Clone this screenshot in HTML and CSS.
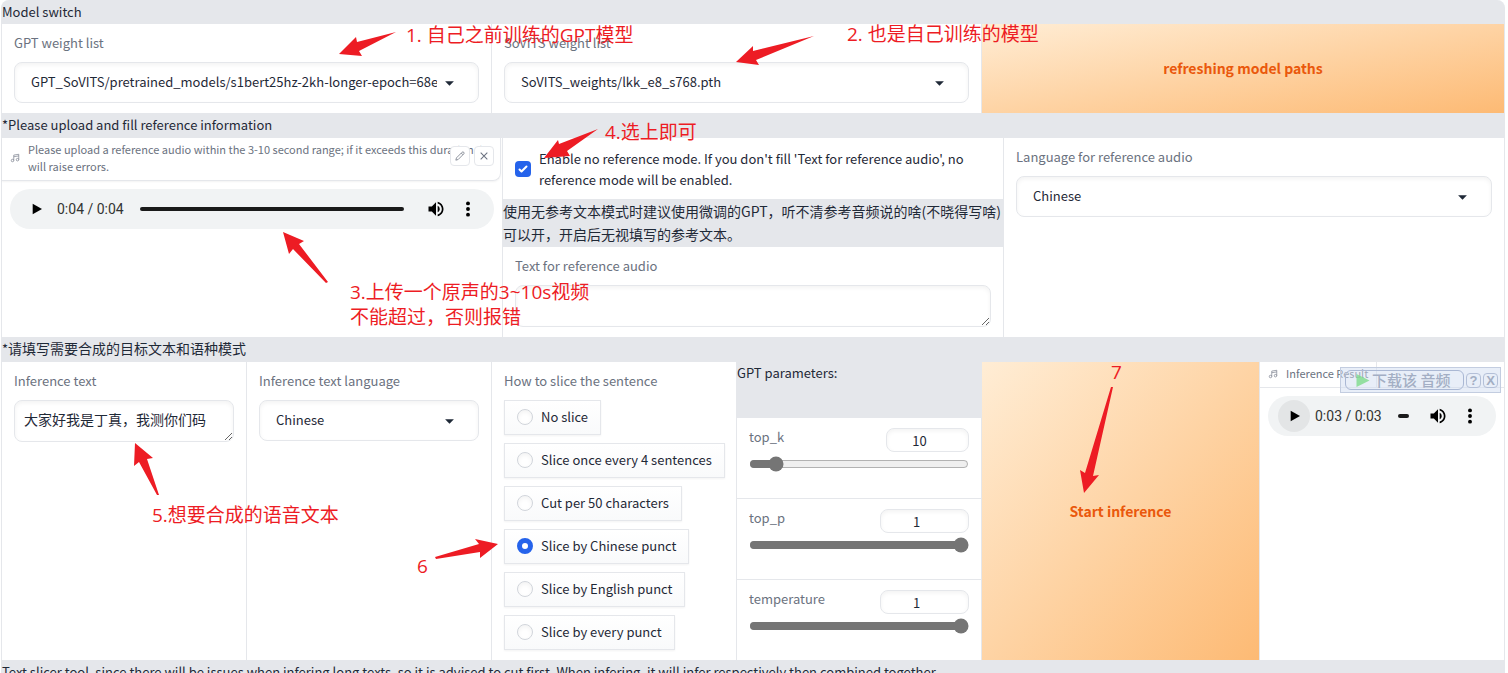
FILE: index.html
```html
<!DOCTYPE html>
<html lang="en">
<head>
<meta charset="utf-8">
<meta name="viewport" content="width=device-width, initial-scale=1">
<title>GPT-SoVITS Inference</title>
<link rel="stylesheet" href="styles.css">
</head>
<body>
<svg class="defs" aria-hidden="true">
  <symbol id="i-caret" viewBox="0 0 10 6"><path d="M1 1h8L5 5z" fill="#1f2937"/></symbol>
  <symbol id="i-music" viewBox="0 0 24 24"><g fill="none" stroke="currentColor" stroke-width="1.5"><path d="M9 18V5l12-2v13M9 9l12-2"/><circle cx="6" cy="18" r="3"/><circle cx="18" cy="16" r="3"/></g></symbol>
  <symbol id="i-pencil" viewBox="0 0 24 24"><path d="M17 3a2.8 2.8 0 1 1 4 4L7.500 20.500 2 22l1.500-5.500zM15 5l4 4" fill="none" stroke="currentColor" stroke-width="1.800" stroke-linejoin="round"/></symbol>
  <symbol id="i-close" viewBox="0 0 24 24"><path d="M4 4l16 16M20 4L4 20" fill="none" stroke="currentColor" stroke-width="2.500"/></symbol>
  <symbol id="i-play" viewBox="0 0 24 24"><path d="M7 4l14 8-14 8z"/></symbol>
  <symbol id="i-volume" viewBox="0 0 24 24"><path d="M3 9v6h4l5 5V4L7 9H3zm13.500 3A4.500 4.500 0 0 0 14 7.970v8.050c1.480-.730 2.500-2.250 2.500-4.020zM14 3.230v2.060c2.890.860 5 3.540 5 6.710s-2.110 5.850-5 6.710v2.060c4.010-.910 7-4.490 7-8.770s-2.990-7.860-7-8.770z"/></symbol>
  <symbol id="i-more" viewBox="0 0 24 24"><circle cx="12" cy="4.500" r="2.600"/><circle cx="12" cy="12" r="2.600"/><circle cx="12" cy="19.500" r="2.600"/></symbol>
</svg>

<main class="app">
  <h2 class="band band-first">Model switch</h2>

  <section class="row row-models">
    <div class="cell field">
      <label class="label" for="gpt">GPT weight list</label>
      <div class="select"><select id="gpt"><option>GPT_SoVITS/pretrained_models/s1bert25hz-2kh-longer-epoch=68e-step=50232.ckpt</option></select><svg><use href="#i-caret"/></svg></div>
    </div>
    <div class="cell field">
      <label class="label" for="sovits">SoVITS weight list</label>
      <div class="select"><select id="sovits"><option>SoVITS_weights/lkk_e8_s768.pth</option></select><svg><use href="#i-caret"/></svg></div>
    </div>
    <button class="primary" type="button">refreshing model paths</button>
  </section>

  <h2 class="band">*Please upload and fill reference information</h2>

  <section class="row row-reference">
    <div class="cell">
      <div class="audio-title audio-title-wide">
        <svg class="music"><use href="#i-music"/></svg>
        <span>Please upload a reference audio within the 3-10 second range; if it exceeds this duration, it will raise errors.</span>
        <div class="tools">
          <button type="button" aria-label="Edit"><svg><use href="#i-pencil"/></svg></button>
          <button type="button" aria-label="Clear"><svg><use href="#i-close"/></svg></button>
        </div>
      </div>
      <div class="player">
        <button type="button" class="play" aria-label="Play"><svg><use href="#i-play"/></svg></button>
        <span class="time">0:04 / 0:04</span>
        <span class="track"></span>
        <button type="button" aria-label="Mute"><svg class="vol"><use href="#i-volume"/></svg></button>
        <button type="button" aria-label="More options"><svg class="more"><use href="#i-more"/></svg></button>
      </div>
    </div>
    <div class="stack">
      <label class="cell check"><input type="checkbox" checked><span>Enable no reference mode. If you don't fill 'Text for reference audio', no reference mode will be enabled.</span></label>
      <p class="note">使用无参考文本模式时建议使用微调的GPT，听不清参考音频说的啥(不晓得写啥)可以开，开启后无视填写的参考文本。</p>
      <div class="cell field grow">
        <label class="label" for="reftext">Text for reference audio</label>
        <textarea id="reftext" rows="1"></textarea>
      </div>
    </div>
    <div class="cell field">
      <label class="label" for="reflang">Language for reference audio</label>
      <div class="select"><select id="reflang"><option>Chinese</option></select><svg><use href="#i-caret"/></svg></div>
    </div>
  </section>

  <h2 class="band">*<span class="zh">请填写需要合成的目标文本和语种模式</span></h2>

  <section class="row row-inference">
    <div class="cell field">
      <label class="label" for="text">Inference text</label>
      <textarea id="text" rows="1">大家好我是丁真，我测你们码</textarea>
    </div>
    <div class="cell field">
      <label class="label" for="lang">Inference text language</label>
      <div class="select"><select id="lang"><option>Chinese</option></select><svg><use href="#i-caret"/></svg></div>
    </div>
    <fieldset class="cell field slices">
      <legend class="label">How to slice the sentence</legend>
      <div class="options">
        <label><input type="radio" name="slice">No slice</label>
        <label><input type="radio" name="slice">Slice once every 4 sentences</label>
        <label><input type="radio" name="slice">Cut per 50 characters</label>
        <label><input type="radio" name="slice" checked>Slice by Chinese punct</label>
        <label><input type="radio" name="slice">Slice by English punct</label>
        <label><input type="radio" name="slice">Slice by every punct</label>
      </div>
    </fieldset>
    <div class="stack">
      <h3 class="params">GPT parameters:</h3>
      <div class="cell slider">
        <div class="slider-head"><label for="topk">top_k</label><input class="num num-short" type="text" inputmode="numeric" value="10" aria-label="top_k value"></div>
        <input id="topk" type="range" min="1" max="100" value="10">
      </div>
      <div class="cell slider">
        <div class="slider-head"><label for="topp">top_p</label><input class="num" type="text" inputmode="numeric" value="1" aria-label="top_p value"></div>
        <input id="topp" type="range" min="0" max="1" step="0.05" value="1">
      </div>
      <div class="cell slider">
        <div class="slider-head"><label for="temp">temperature</label><input class="num" type="text" inputmode="numeric" value="1" aria-label="temperature value"></div>
        <input id="temp" type="range" min="0" max="1" step="0.05" value="1">
      </div>
    </div>
    <button class="primary" type="button">Start inference</button>
    <div class="cell result">
      <div class="audio-title"><span class="tab"><svg class="music"><use href="#i-music"/></svg><span>Inference Result</span></span></div>
      <div class="player player-small">
        <button type="button" class="play" aria-label="Play"><svg><use href="#i-play"/></svg></button>
        <span class="time">0:03 / 0:03</span>
        <span class="track"></span>
        <button type="button" aria-label="Mute"><svg class="vol"><use href="#i-volume"/></svg></button>
        <button type="button" aria-label="More options"><svg class="more"><use href="#i-more"/></svg></button>
      </div>
      <div class="grabber">
        <button type="button" class="grab"><svg viewBox="0 0 14 14"><path d="M0 0l14 7-14 7z" fill="#7fdc8c"/></svg>下载该 音频</button>
        <button type="button" class="mini">?</button>
        <button type="button" class="mini">X</button>
      </div>
    </div>
  </section>

  <h2 class="band">Text slicer tool, since there will be issues when infering long texts, so it is advised to cut first. When infering, it will infer respectively then combined together.</h2>

  <div class="notes">
    <svg class="arrows" viewBox="0 0 1508 673" aria-hidden="true">
      <path d="M396 32L357 42 356 37 339 54 362 56 359 51z"/>
      <path d="M814 36L753 51 753 46 736 62 759 65 756 60z"/>
      <path d="M283 232L304 241 299 244 328 282 326 283 293 249 289 254z"/>
      <path d="M598 129L559 144 558 140 544 158 570 156 567 151z"/>
      <path d="M135 443L153 458 147 459 159 495 157 495 139 462 134 466z"/>
      <path d="M498 544L475 539 479 544 435 557 436 559 480 552 480 558z"/>
      <path d="M1113 387L1111 387 1085 473 1080 470 1084 493 1099 475 1093 476z"/>
    </svg>
    <span class="pin p1">1. 自己之前训练的GPT模型</span>
    <span class="pin p2">2. 也是自己训练的模型</span>
    <span class="pin p3">3.上传一个原声的3~10s视频<br>不能超过，否则报错</span>
    <span class="pin p4">4.选上即可</span>
    <span class="pin p5">5.想要合成的语音文本</span>
    <span class="pin p6">6</span>
    <span class="pin p7">7</span>
  </div>
</main>
</body>
</html>
```

FILE: styles.css
```css
:root {
  --line: #e5e7eb;
  --ink: #1f2937;
  --muted: #6b7280;
  --ui: "Noto Sans CJK SC", sans-serif;
}
* { box-sizing: border-box; }
body {
  margin: 0;
  height: 100vh;
  overflow: hidden;
  background: #fff;
  color: var(--ink);
  font: 13px/21px var(--ui);
}
button, input, select, textarea { font: inherit; color: inherit; margin: 0; }
button { border: 0; padding: 0; background: none; }
h2, h3, p { margin: 0; font: inherit; }
.defs { position: absolute; width: 0; height: 0; }

.app {
  position: relative;
  margin: 0 3px 0 1px;
  border: 0 solid var(--line);
  border-width: 0 1px;
  border-radius: 8px 8px 0 0;
  background: var(--line);
}
.band { padding: 1px 0 3px; white-space: nowrap; }
.band-first { padding: 1px 0 2px; }
.zh { font-size: 14px; }

.row { display: grid; gap: 1px; }
.row-models { grid-template-columns: 489fr 489fr 522fr; }
.row-reference { grid-template-columns: repeat(3, 1fr); }
.row-inference { grid-template-columns: 244fr 244fr 244fr 244fr 277fr 244fr; }
.row > * { min-width: 0; }
.cell { background: #fff; }
.stack { display: flex; flex-direction: column; gap: 1px; }
.grow { flex: 1; }

.field { padding: 8px 12px 10px; }
.label { display: block; margin-bottom: 9px; color: var(--muted); }
.select { position: relative; }
.select select, textarea, .num {
  border: 1px solid var(--line);
  border-radius: 8px;
  background: #fff;
  box-shadow: inset 0 2px 4px rgba(0, 0, 0, .05);
  outline: 0;
}
.select select {
  display: block;
  width: 100%;
  height: 41px;
  padding: 0 41px 2px 16px;
  appearance: none;
}
.select svg { position: absolute; right: 24px; top: 18px; width: 11px; height: 7px; pointer-events: none; }
textarea {
  display: block;
  width: 100%;
  height: 42px;
  padding: 8px 9px;
  font-size: 14px;
  resize: vertical;
  overflow: hidden;
}

.primary {
  background: linear-gradient(to bottom right, #ffedd5, #fdba74);
  color: #ea580c;
  font-size: 14px;
  font-weight: 600;
}

.audio-title { position: relative; color: var(--muted); font-size: 11px; line-height: 17px; border-bottom: 1px solid var(--line); }
.audio-title-wide {
  display: flex;
  align-items: center;
  gap: 8px;
  margin-right: 1px;
  padding: 3px 8px 5px;
  border-right: 1px solid var(--line);
  border-bottom-right-radius: 8px;
  box-shadow: 0 1px 2px rgba(0, 0, 0, .05);
}
.music { flex: none; width: 10px; height: 12px; }
.tab { display: inline-flex; align-items: center; gap: 8px; padding: 3px 8px 5px; border-right: 1px solid var(--line); vertical-align: top; }
.tools { position: absolute; top: 8px; right: 6px; display: flex; gap: 4px; }
.tools button {
  display: grid;
  place-items: center;
  width: 20px;
  height: 20px;
  border: 1px solid var(--line);
  border-radius: 4px;
  background: #fff;
}
.tools svg { width: 10px; height: 10px; }

.player {
  display: flex;
  align-items: center;
  height: 40px;
  margin: 8px 8px 0;
  padding: 0 10px;
  border-radius: 20px;
  background: #f1f3f4;
}
.player button { display: grid; place-items: center; width: 32px; height: 32px; border-radius: 50%; flex: none; }
.player svg { width: 16px; height: 16px; }
.player .vol { width: 20px; height: 20px; }
.player .more { width: 18px; height: 18px; }
.time { padding: 0 16px 0 5px; font: 14px/20px Roboto, sans-serif; color: #333; white-space: nowrap; }
.track { flex: 1; height: 4px; margin-right: 16px; border-radius: 2px; background: #1a1a1a; }
.player-small .play { background: #e3e5e6; }
.player-small .track { margin-right: 13px; }

.check { display: flex; align-items: center; gap: 8px; padding: 10px 12px 9px; }
.check input {
  flex: none;
  width: 16px;
  height: 16px;
  appearance: none;
  border-radius: 4px;
  background: #2563eb url("data:image/svg+xml,%3Csvg viewBox='0 0 16 16' fill='white' xmlns='http://www.w3.org/2000/svg'%3E%3Cpath d='M12.207 4.793a1 1 0 010 1.414l-5 5a1 1 0 01-1.414 0l-2-2a1 1 0 011.414-1.414L6.500 9.086l4.293-4.293a1 1 0 011.414 0z'/%3E%3C/svg%3E");
}
.note { font-size: 14px; line-height: 23px; }

.slices { border: 0; margin: 0; }
.slices legend { float: left; padding: 0; }
.options { clear: both; display: flex; flex-direction: column; align-items: flex-start; gap: 8px; }
.options label {
  display: flex;
  align-items: center;
  gap: 8px;
  height: 35px;
  padding: 0 12px 2px;
  border: 1px solid var(--line);
  background: linear-gradient(#fff, #f9fafb);
  box-shadow: 0 1px 2px rgba(0, 0, 0, .05);
  white-space: nowrap;
}
.options input {
  width: 16px;
  height: 16px;
  appearance: none;
  border: 1px solid #d1d5db;
  border-radius: 50%;
  background: #fff;
  box-shadow: inset 0 2px 4px rgba(0, 0, 0, .05);
}
.options input:checked { border: 5px solid #2563eb; box-shadow: none; }

.params { height: 55px; }
.slider { flex: 1; padding: 10px 12px; }
.slider-head { display: flex; justify-content: space-between; align-items: flex-start; color: var(--muted); line-height: 18px; }
.num { width: 89px; height: 24px; padding: 0 16px 0 0; text-align: center; color: var(--ink); }
.num-short { width: 83px; }
.slider input[type="range"] { display: block; width: 100%; margin: 4px 0 0; accent-color: #757575; }

.result { position: relative; }
.grabber {
  position: absolute;
  top: 5px;
  right: 3px;
  display: flex;
  align-items: center;
  gap: 2px;
  width: 161px;
  height: 26px;
  padding: 0 2px 0 4px;
  border: 1px solid #c3cde0;
  background: rgba(210, 222, 242, .5);
  color: #a3aec4;
}
.grab {
  display: flex;
  align-items: center;
  flex: 1;
  height: 20px;
  padding: 0 0 0 10px;
  border: 1px solid #aab8d4;
  border-radius: 6px;
  font-size: 15px;
  font-weight: 500;
  line-height: 18px;
  white-space: nowrap;
  gap: 2px;
}
.grab svg { width: 14px; height: 13px; opacity: .8; }
.mini { width: 15px; height: 15px; border: 1px solid #b4c0d8; border-radius: 4px; font: bold 13px/13px "Liberation Sans", sans-serif; }

.notes { position: absolute; top: 0; left: -2px; pointer-events: none; }
.arrows { position: absolute; top: 0; left: 0; width: 1508px; height: 673px; fill: #ed1c24; }
.pin { position: absolute; color: #ed1c24; font: 19px/25px "Open Sans", "Noto Sans CJK SC", sans-serif; white-space: nowrap; }
.p1 { left: 406px; top: 23px; }
.p2 { left: 847px; top: 22px; }
.p3 { left: 350px; top: 280px; }
.p4 { left: 605px; top: 120px; }
.p5 { left: 152px; top: 503px; }
.p6 { left: 417px; top: 554px; }
.p7 { left: 1111px; top: 360px; }
```
